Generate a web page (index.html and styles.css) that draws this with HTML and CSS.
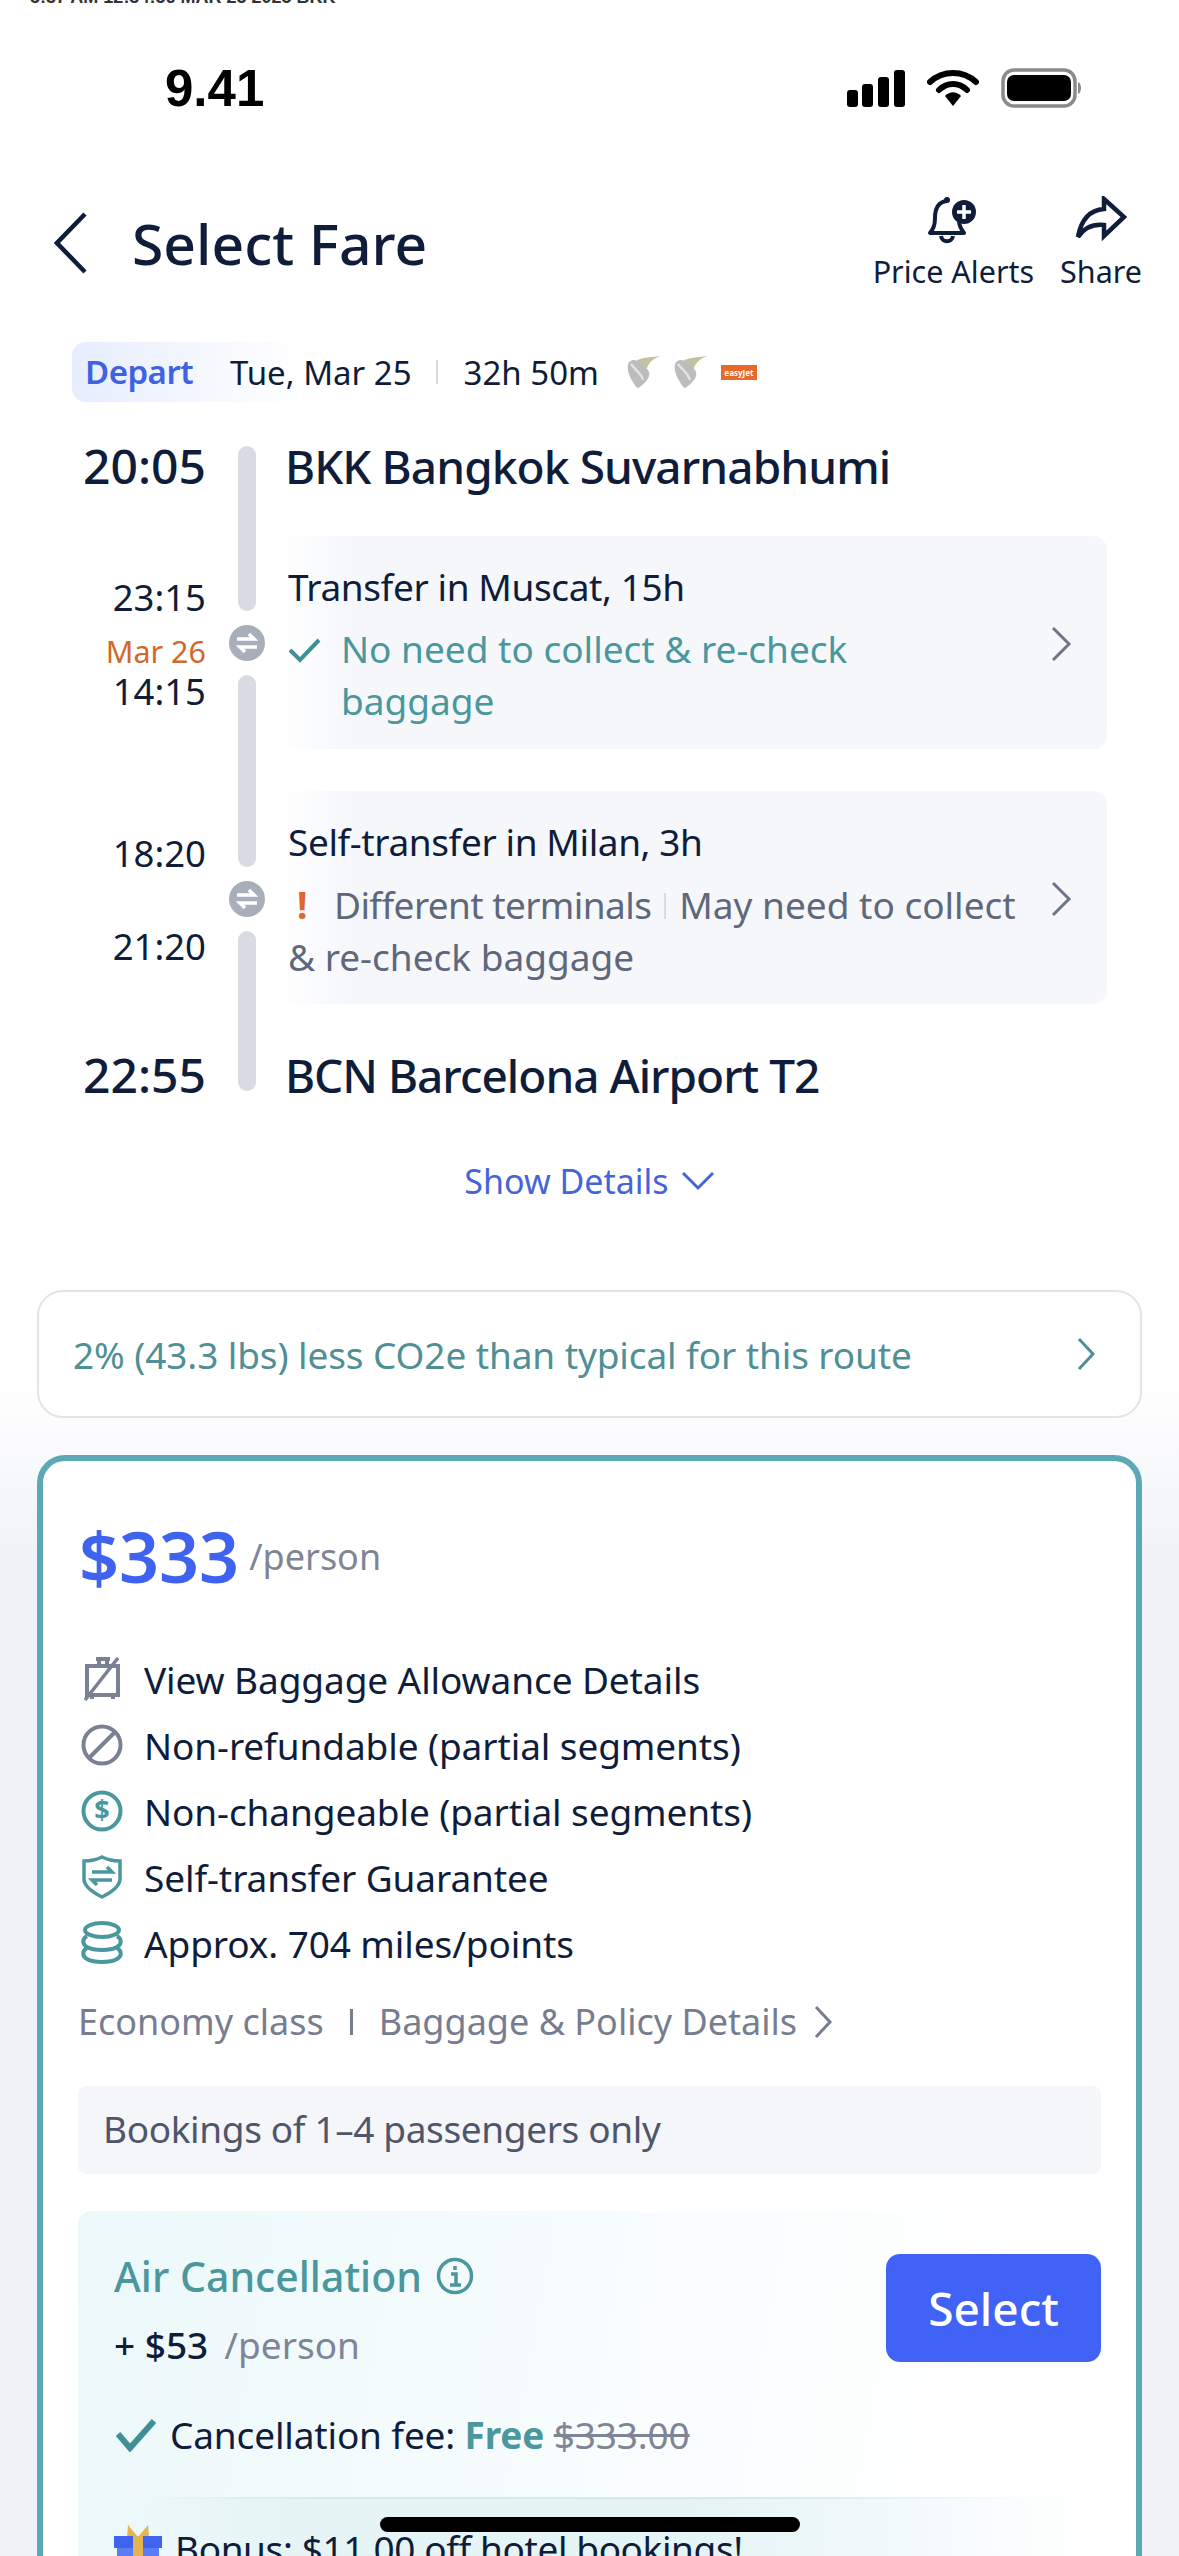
FILE: index.html
```html
<!DOCTYPE html>
<html>
  <head>
    <link rel="stylesheet" href="styles.css">
    <meta charset="utf-8" />
    <meta name="viewport" content="width=device-width, initial-scale=1" />
    <title>Select Fare</title>
  </head>
  <body>
    <div class="screen">
      <div class="cutLine"><span>5:37 AM 12:34:56 MAR 25 2025 BKK</span></div>

      <div class="statusBar">
        <span class="clock">9.41</span>
        <div class="statusIcons">
          <svg width="58" height="38" viewBox="0 0 58 38">
            <rect x="0" y="21" width="11" height="17" rx="3" fill="#000" />
            <rect x="15" y="15" width="11" height="23" rx="3" fill="#000" />
            <rect x="31" y="8" width="11" height="30" rx="3" fill="#000" />
            <rect x="47" y="1" width="11" height="37" rx="3" fill="#000" />
          </svg>
          <svg width="52" height="38" viewBox="0 0 52 38">
            <path d="M3 13 C16 1 36 1 49 13" fill="none" stroke="#000" stroke-width="6" stroke-linecap="round" />
            <path d="M12 21 C20 13 32 13 40 21" fill="none" stroke="#000" stroke-width="6" stroke-linecap="round" />
            <path d="M18 27 C23 22 29 22 34 27 L26 37 Z" fill="#000" />
          </svg>
          <svg width="82" height="40" viewBox="0 0 82 40">
            <rect x="2" y="2" width="72" height="36" rx="11" fill="#fff" stroke="#8b8b8b" stroke-width="3.5" />
            <rect x="6" y="7" width="64" height="26" rx="7" fill="#000" />
            <path d="M77 14 C81 15 81 25 77 26 Z" fill="#8b8b8b" />
          </svg>
        </div>
      </div>

      <header class="topBar">
        <svg class="backIcon" width="34" height="62" viewBox="0 0 34 62">
          <path d="M31 2 L3 31 L31 60" fill="none" stroke="#0f1d3a" stroke-width="4.5" />
        </svg>
        <h1 class="pageTitle">Select Fare</h1>
        <div class="topActions">
          <div class="topAction">
            <svg width="52" height="50" viewBox="0 0 52 50">
              <path d="M20 5 C10 6 8 14 8 22 C8 30 6 33 3 37 L37 37 C34 33 32.5 30 32 26" fill="none" stroke="#0f1d3a" stroke-width="4" stroke-linejoin="round" />
              <circle cx="20" cy="4" r="3" fill="#0f1d3a" />
              <path d="M14 40 C15 47 25 47 26 40" fill="none" stroke="#0f1d3a" stroke-width="4" />
              <circle cx="37" cy="16" r="12" fill="#0f1d3a" />
              <path d="M37 9 V23 M30 16 H44" stroke="#fff" stroke-width="3.5" />
            </svg>
            <span>Price Alerts</span>
          </div>
          <div class="topAction">
            <svg width="52" height="50" viewBox="0 0 52 50" preserveAspectRatio="xMidYMin">
              <path d="M29 3 L49 21 L29 40 L29 29 C18 28 9 32 3 41 C6 24 15 14 29 13 Z" fill="none" stroke="#0f1d3a" stroke-width="4.5" stroke-linejoin="miter" />
            </svg>
            <span>Share</span>
          </div>
        </div>
      </header>

      <div class="departRow">
        <span class="departTag">Depart</span>
        <span class="departDate">Tue, Mar 25</span>
        <span class="departSep"></span>
        <span class="departDur">32h 50m</span>
        <svg class="airLogo" width="34" height="32" viewBox="0 0 34 32">
          <path d="M10 4 C18 1 26 1 34 0 C27 2 22 6 20 12 L12 10 Z" fill="#c4c1a0" />
          <path d="M1 8 C3 3 9 3 12 6 C17 10 24 14 22 20 C20 26 14 30 11 32 C10 32 8 30 6 26 C2 20 0 14 1 8 Z" fill="#bcbcbc" />
          <path d="M4 8 C8 14 14 17 16 24" fill="none" stroke="#e2e2e2" stroke-width="2.5" />
        </svg>
        <svg class="airLogo" width="34" height="32" viewBox="0 0 34 32">
          <path d="M10 4 C18 1 26 1 34 0 C27 2 22 6 20 12 L12 10 Z" fill="#c4c1a0" />
          <path d="M1 8 C3 3 9 3 12 6 C17 10 24 14 22 20 C20 26 14 30 11 32 C10 32 8 30 6 26 C2 20 0 14 1 8 Z" fill="#bcbcbc" />
          <path d="M4 8 C8 14 14 17 16 24" fill="none" stroke="#e2e2e2" stroke-width="2.5" />
        </svg>
        <span class="easyLogo">easyJet</span>
      </div>

      <section class="itinerary">
        <div class="timesCol">
          <div class="timeBig">20:05</div>
          <div class="timeSmall t1">23:15</div>
          <div class="dateShift">Mar 26</div>
          <div class="timeSmall">14:15</div>
          <div class="timeSmall t2">18:20</div>
          <div class="timeSmall t3">21:20</div>
          <div class="timeBig t4">22:55</div>
        </div>

        <div class="railCol">
          <div class="railBar r1"></div>
          <div class="railDot">
            <svg width="24" height="22" viewBox="0 0 24 22"><path d="M2 7 H19 L14 2 M22 15 H5 L10 20" fill="none" stroke="#fff" stroke-width="3.5" /></svg>
          </div>
          <div class="railBar r2"></div>
          <div class="railDot">
            <svg width="24" height="22" viewBox="0 0 24 22"><path d="M2 7 H19 L14 2 M22 15 H5 L10 20" fill="none" stroke="#fff" stroke-width="3.5" /></svg>
          </div>
          <div class="railBar r3"></div>
        </div>

        <div class="stopsCol">
          <div class="airport">BKK Bangkok Suvarnabhumi</div>

          <div class="transferCard first">
            <div class="transferText">
              <div class="transferTitle">Transfer in Muscat, 15h</div>
              <div class="transferOk">
                <svg width="33" height="26" viewBox="0 0 33 26"><path d="M2 13 L12 23 L31 3" fill="none" stroke="#3f8f96" stroke-width="4" /></svg>
                <span>No need to collect &amp; re-check<br>baggage</span>
              </div>
            </div>
            <svg class="chevron" width="22" height="36" viewBox="0 0 22 36"><path d="M3 2 L19 18 L3 34" fill="none" stroke="#6f7588" stroke-width="3" /></svg>
          </div>

          <div class="transferCard">
            <div class="transferText">
              <div class="transferTitle">Self-transfer in Milan, 3h</div>
              <div class="transferWarn"><span class="warnMark">!</span><span class="warnTerm">Different terminals</span><span class="warnSep"></span>May need to collect<br>&amp; re-check baggage</div>
            </div>
            <svg class="chevron" width="22" height="36" viewBox="0 0 22 36"><path d="M3 2 L19 18 L3 34" fill="none" stroke="#6f7588" stroke-width="3" /></svg>
          </div>

          <div class="airport last">BCN Barcelona Airport T2</div>
        </div>
      </section>

      <div class="showDetails">
        <span>Show Details</span>
        <svg width="34" height="20" viewBox="0 0 34 20"><path d="M2 2 L17 17 L32 2" fill="none" stroke="#4465d8" stroke-width="3" /></svg>
      </div>

      <div class="co2Card">
        <span>2% (43.3 lbs) less CO2e than typical for this route</span>
        <svg width="20" height="34" viewBox="0 0 20 34"><path d="M3 2 L17 17 L3 32" fill="none" stroke="#4f8f95" stroke-width="3" /></svg>
      </div>

      <section class="fareCard">
        <div class="priceLine">
          <span class="price">$333</span>
          <span class="perPerson">/person</span>
        </div>

        <ul class="perks">
          <li>
            <svg width="40" height="44" viewBox="0 0 40 44">
              <path d="M14 2 H28 M17 2 V9 M25 2 V9" stroke="#7b8194" stroke-width="4" fill="none" />
              <rect x="5" y="9" width="31" height="29" fill="none" stroke="#7b8194" stroke-width="4" />
              <path d="M10 38 V42 M31 38 V42" stroke="#7b8194" stroke-width="4" />
              <path d="M36 1 L3 43" stroke="#7b8194" stroke-width="3.5" />
            </svg>
            <span>View Baggage Allowance Details</span>
          </li>
          <li>
            <svg width="42" height="42" viewBox="0 0 42 42">
              <circle cx="21" cy="21" r="18.5" fill="none" stroke="#7b8194" stroke-width="4" />
              <path d="M34 8 L8 34" stroke="#7b8194" stroke-width="4" />
            </svg>
            <span>Non-refundable (partial segments)</span>
          </li>
          <li>
            <svg width="42" height="42" viewBox="0 0 42 42">
              <circle cx="21" cy="21" r="18.5" fill="none" stroke="#4a979d" stroke-width="4" />
              <text x="21" y="30" text-anchor="middle" class="dollarMark">$</text>
            </svg>
            <span>Non-changeable (partial segments)</span>
          </li>
          <li>
            <svg width="42" height="44" viewBox="0 0 42 44">
              <path d="M21 2 C27 5 33 6 39 6 V24 C39 32 29 38 21 42 C13 38 3 32 3 24 V6 C9 6 15 5 21 2 Z" fill="none" stroke="#4a979d" stroke-width="3.5" />
              <path d="M11 17 H31 L26 12 M31 25 H11 L16 30" fill="none" stroke="#4a979d" stroke-width="3.5" />
            </svg>
            <span>Self-transfer Guarantee</span>
          </li>
          <li>
            <svg width="42" height="44" viewBox="0 0 42 44">
              <ellipse cx="21" cy="9" rx="17" ry="7" fill="none" stroke="#4a979d" stroke-width="4" />
              <path d="M6 15 C1 18 1 23 6 26 C13 30 29 30 36 26 C41 23 41 18 36 15" fill="none" stroke="#4a979d" stroke-width="4" />
              <path d="M6 27 C1 30 1 35 6 38 C13 42 29 42 36 38 C41 35 41 30 36 27" fill="none" stroke="#4a979d" stroke-width="4" />
            </svg>
            <span>Approx. 704 miles/points</span>
          </li>
        </ul>

        <div class="classRow">
          <span>Economy class</span>
          <span class="classSep"></span>
          <span>Baggage &amp; Policy Details</span>
          <svg width="20" height="34" viewBox="0 0 20 34"><path d="M3 2 L17 17 L3 32" fill="none" stroke="#777d90" stroke-width="3" /></svg>
        </div>

        <div class="bookingNote">Bookings of 1–4 passengers only</div>

        <div class="addonBox">
          <div class="addonHead">
            <div>
              <div class="addonTitle">
                <span>Air Cancellation</span>
                <svg width="38" height="38" viewBox="0 0 38 38">
                  <circle cx="19" cy="19" r="16.5" fill="none" stroke="#4a979d" stroke-width="3.5" />
                  <path d="M15 17 H20 V27 M14 28 H25 M19 9 V13" fill="none" stroke="#4a979d" stroke-width="3.5" />
                </svg>
              </div>
              <div class="addonPrice"><b>+ $53</b><span>/person</span></div>
            </div>
            <button class="selectBtn">Select</button>
          </div>
          <div class="feeLine">
            <svg width="40" height="34" viewBox="0 0 40 34"><path d="M2 16 L14 30 L38 3" fill="none" stroke="#3f8f96" stroke-width="6" /></svg>
            <span>Cancellation fee: <b>Free</b> <s>$333.00</s></span>
          </div>
          <div class="bonusBand">
            <div class="bonusLine">
              <svg width="48" height="60" viewBox="0 0 48 60">
                <path d="M24 14 L14 2 L13 14 Z M24 14 L34 2 L35 14 Z" fill="#e5b34f" />
                <rect x="0" y="13" width="48" height="12" fill="#3f63ee" />
                <rect x="3" y="25" width="42" height="35" fill="#5c7cf5" />
                <rect x="19" y="13" width="10" height="47" fill="#e5b34f" />
              </svg>
              <span>Bonus: $11.00 off hotel bookings!</span>
            </div>
          </div>
        </div>
      </section>

      <div class="homeBar"></div>
    </div>
  </body>
</html>
```

FILE: styles.css
```css
* {
  box-sizing: border-box;
}

body {
  margin: 0;
  font-family: "Noto Sans", sans-serif;
  color: #0f1d3a;
}

.screen {
  position: relative;
  width: 1179px;
  height: 2556px;
  overflow: hidden;
  background: linear-gradient(#fff 1380px, #f0f2f7 1560px);
}

.cutLine {
  height: 3px;
  padding-left: 30px;
  overflow: hidden;
  font-family: "Liberation Sans", sans-serif;
  font-size: 18px;
  font-weight: bold;
  color: #333;
}

.cutLine span {
  display: block;
  margin-top: -12px;
  line-height: 18px;
  white-space: nowrap;
}

.statusBar {
  display: flex;
  align-items: center;
  justify-content: space-between;
  height: 40px;
  margin-top: 65px;
  padding: 0 96px 0 165px;
}

.clock {
  font-family: "Liberation Sans", sans-serif;
  font-size: 51px;
  font-weight: bold;
  color: #000;
}

.statusIcons {
  display: flex;
  align-items: center;
  gap: 22px;
}

.topBar {
  display: flex;
  align-items: center;
  height: 100px;
  margin-top: 85px;
  padding-left: 54px;
}

.backIcon {
  margin-right: 44px;
}

.pageTitle {
  margin: 0;
  font-size: 57px;
  font-weight: 500;
}

.topActions {
  display: flex;
  align-self: flex-start;
  gap: 26px;
  margin-top: 3px;
  margin-left: auto;
  padding-right: 37px;
}

.topAction {
  display: flex;
  flex-direction: column;
  align-items: center;
  gap: 6px;
  font-size: 30.5px;
  line-height: 38px;
}

.departRow {
  display: flex;
  align-items: center;
  height: 60px;
  margin-top: 49px;
  margin-left: 72px;
  font-size: 33px;
}

.departTag {
  width: 230px;
  margin-right: -72px;
  padding: 8px 13px;
  border-radius: 14px;
  background: linear-gradient(90deg, #e6edfd, #fff);
  color: #3f63e0;
  font-weight: 600;
  letter-spacing: -0.5px;
  line-height: 44px;
}

.departDate {
  position: relative;
}

.departSep {
  width: 2px;
  height: 24px;
  margin: 0 26px 0 24px;
  background: #d9dbe0;
}

.departDur {
  margin-right: 28px;
}

.airLogo {
  margin-right: 13px;
}

.easyLogo {
  width: 36px;
  height: 15px;
  background: #e86a2a;
  color: #fff;
  font-size: 8px;
  font-weight: bold;
  line-height: 15px;
  text-align: center;
}

.itinerary {
  display: flex;
  margin-top: 44px;
}

.timesCol {
  width: 206px;
  text-align: right;
}

.timeBig {
  font-size: 48px;
  font-weight: 500;
  line-height: 40px;
}

.timeSmall {
  font-size: 36.5px;
  line-height: 44px;
}

.t1 {
  margin-top: 89px;
}

.t2 {
  margin-top: 118px;
}

.t3 {
  margin-top: 49px;
}

.t4 {
  margin-top: 87px;
}

.dateShift {
  margin-top: 14px;
  color: #d0692c;
  font-size: 30.5px;
  line-height: 36px;
}

.railCol {
  display: flex;
  flex-direction: column;
  align-items: center;
  width: 36px;
  margin-left: 23px;
  gap: 14px;
}

.railBar {
  width: 18px;
  border-radius: 9px;
  background: #d8dce2;
}

.r1 {
  height: 165px;
}

.r2 {
  height: 192px;
}

.r3 {
  height: 160px;
}

.railDot {
  display: flex;
  align-items: center;
  justify-content: center;
  width: 36px;
  height: 36px;
  border-radius: 50%;
  background: #a9afba;
}

.stopsCol {
  width: 825px;
  margin-left: 17px;
}

.airport {
  padding-left: 3px;
  font-size: 46px;
  font-weight: 500;
  line-height: 40px;
  letter-spacing: -0.9px;
}

.airport.last {
  margin-top: 51px;
  letter-spacing: -1px;
}

.transferCard {
  display: flex;
  align-items: center;
  justify-content: space-between;
  margin-top: 42px;
  padding: 29px 35px 22px 6px;
  border-radius: 14px;
  background: linear-gradient(90deg, #fff, #f5f7fb 8%);
}

.transferCard.first {
  margin-top: 50px;
}

.chevron {
  margin-bottom: 5px;
}

.transferTitle {
  font-size: 37px;
  line-height: 44px;
  letter-spacing: -0.4px;
}

.transferOk {
  display: flex;
  gap: 20px;
  margin-top: 14px;
  color: #4a979d;
  font-size: 37px;
  line-height: 52px;
}

.transferOk svg {
  flex: none;
  margin-top: 14px;
}

.transferWarn {
  margin-top: 15px;
  margin-bottom: -1px;
  color: #5f677b;
  font-size: 37px;
  line-height: 52px;
}

.warnMark {
  display: inline-block;
  width: 46px;
  padding-left: 9px;
  color: #e0662a;
  font-weight: bold;
}

.warnTerm {
  letter-spacing: -0.6px;
}

.warnSep {
  display: inline-block;
  width: 2px;
  height: 26px;
  margin: 0 13px;
  background: #d9dbe0;
}

.showDetails {
  display: flex;
  align-items: center;
  justify-content: center;
  gap: 12px;
  height: 44px;
  margin-top: 64px;
  color: #4465d8;
  font-size: 34px;
}

.co2Card {
  display: flex;
  align-items: center;
  justify-content: space-between;
  height: 128px;
  margin: 87px 37px 0;
  padding: 0 44px 0 34px;
  border: 2px solid #e2e4e8;
  border-radius: 26px;
  background: #fff;
  color: #4f8f95;
  font-size: 37px;
  letter-spacing: -0.1px;
}

.fareCard {
  height: 1140px;
  margin: 37px 37px 0;
  padding: 0 35px;
  border: 6px solid #5aa9b5;
  border-radius: 28px;
  background: #fff;
}

.priceLine {
  display: flex;
  align-items: center;
  gap: 10px;
  padding-top: 45px;
  padding-left: 1px;
}

.price {
  color: #3f63ee;
  font-size: 70px;
  font-weight: 600;
  line-height: 100px;
}

.perPerson {
  color: #7f8596;
  font-size: 36px;
}

.perks {
  margin: 40px 0 0;
  padding: 0 0 0 3px;
  list-style: none;
  font-size: 37px;
  letter-spacing: -0.1px;
}

.perks li {
  display: flex;
  align-items: center;
  height: 66px;
}

.perks svg {
  width: 42px;
  margin-right: 21px;
}

.dollarMark {
  fill: #4a979d;
  font-size: 27px;
  font-weight: bold;
}

.classRow {
  display: flex;
  align-items: center;
  margin-top: 22px;
  color: #777d90;
  font-size: 36px;
  line-height: 48px;
}

.classRow svg {
  margin-left: 16px;
}

.classSep {
  width: 3px;
  height: 26px;
  margin: 0 26px;
  background: #777d90;
}

.bookingNote {
  height: 88px;
  margin-top: 40px;
  padding-left: 25px;
  border-radius: 8px;
  background: #f5f6f9;
  color: #4f566b;
  font-size: 37px;
  letter-spacing: -0.37px;
  line-height: 86px;
}

.addonBox {
  height: 400px;
  margin-top: 37px;
  border-radius: 14px;
  background: linear-gradient(100deg, #ecf8fa, #fff 85%);
}

.addonHead {
  display: flex;
  justify-content: space-between;
  padding: 43px 0 0 36px;
}

.addonTitle {
  display: flex;
  align-items: center;
  gap: 14px;
  color: #4a979d;
  font-size: 41px;
  font-weight: 500;
  line-height: 44px;
}

.addonPrice {
  margin-top: 25px;
  font-size: 37px;
  line-height: 44px;
}

.addonPrice b {
  margin-right: 16px;
  font-weight: 500;
}

.addonPrice span {
  color: #7f8596;
}

.selectBtn {
  width: 215px;
  height: 108px;
  border: none;
  border-radius: 14px;
  background: #4163f5;
  color: #fff;
  font-family: "Noto Sans", sans-serif;
  font-size: 46px;
  font-weight: 500;
}

.feeLine {
  display: flex;
  align-items: center;
  gap: 14px;
  margin-top: 46px;
  padding-left: 38px;
  font-size: 37px;
  letter-spacing: -0.15px;
  line-height: 44px;
}

.feeLine b {
  color: #4a979d;
  font-weight: bold;
}

.feeLine s {
  color: #7f8596;
}

.bonusBand {
  height: 100px;
  margin-top: 40px;
  padding: 26px 0 0 36px;
  background:
    linear-gradient(90deg, transparent 8%, #d5e8ea 25%, #d5e8ea 65%, transparent 92%) top / 100% 2px no-repeat,
    linear-gradient(90deg, transparent, #e6f4f6 20%, #e6f4f6 60%, transparent);
}

.bonusLine {
  display: flex;
  gap: 13px;
  font-size: 37px;
  letter-spacing: -0.4px;
  line-height: 44px;
}

.bonusLine span {
  margin-top: 4px;
}

.homeBar {
  position: absolute;
  left: 380px;
  bottom: 24px;
  width: 420px;
  height: 15px;
  border-radius: 8px;
  background: #000;
}
```
